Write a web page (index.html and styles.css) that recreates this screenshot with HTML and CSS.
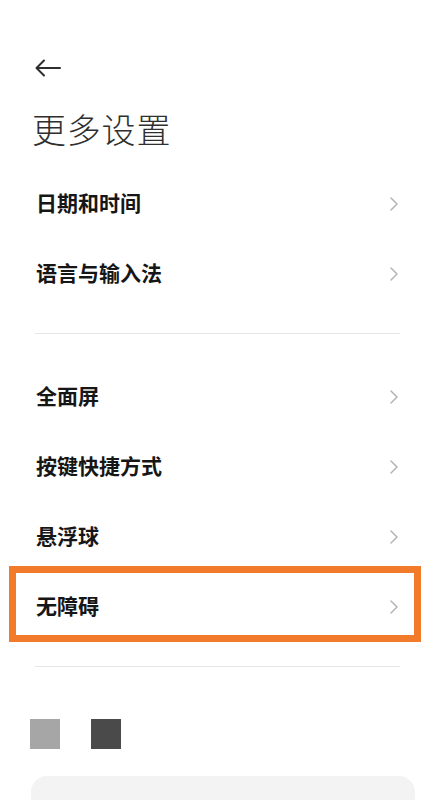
FILE: index.html
```html
<!DOCTYPE html>
<html lang="zh-CN">
<head>
<meta charset="utf-8">
<title>更多设置</title>
<link rel="stylesheet" href="styles.css">
</head>
<body>
<div class="page">
  <header class="header">
    <svg class="back" width="26" height="24" viewBox="0 0 26 24" aria-hidden="true">
      <path d="M25 12 H2 M9 4.5 L1.5 12 L9 19.5" fill="none" stroke="#2e2e2e" stroke-width="2" stroke-linecap="round" stroke-linejoin="round"/>
    </svg>
  </header>
  <h1 class="title">更多设置</h1>

  <ul class="group">
    <li class="row"><span class="label">日期和时间</span><svg class="chev" width="12" height="16" viewBox="0 0 12 16"><path d="M3 2 L9 8 L3 14" fill="none" stroke="#b4b4b4" stroke-width="1.5" stroke-linecap="round" stroke-linejoin="round"/></svg></li>
    <li class="row"><span class="label">语言与输入法</span><svg class="chev" width="12" height="16" viewBox="0 0 12 16"><path d="M3 2 L9 8 L3 14" fill="none" stroke="#b4b4b4" stroke-width="1.5" stroke-linecap="round" stroke-linejoin="round"/></svg></li>
  </ul>

  <div class="divider"></div>

  <ul class="group">
    <li class="row"><span class="label">全面屏</span><svg class="chev" width="12" height="16" viewBox="0 0 12 16"><path d="M3 2 L9 8 L3 14" fill="none" stroke="#b4b4b4" stroke-width="1.5" stroke-linecap="round" stroke-linejoin="round"/></svg></li>
    <li class="row"><span class="label">按键快捷方式</span><svg class="chev" width="12" height="16" viewBox="0 0 12 16"><path d="M3 2 L9 8 L3 14" fill="none" stroke="#b4b4b4" stroke-width="1.5" stroke-linecap="round" stroke-linejoin="round"/></svg></li>
    <li class="row"><span class="label">悬浮球</span><svg class="chev" width="12" height="16" viewBox="0 0 12 16"><path d="M3 2 L9 8 L3 14" fill="none" stroke="#b4b4b4" stroke-width="1.5" stroke-linecap="round" stroke-linejoin="round"/></svg></li>
    <li class="row row-highlight"><span class="label">无障碍</span><svg class="chev" width="12" height="16" viewBox="0 0 12 16"><path d="M3 2 L9 8 L3 14" fill="none" stroke="#b4b4b4" stroke-width="1.5" stroke-linecap="round" stroke-linejoin="round"/></svg></li>
  </ul>

  <div class="divider"></div>

  <div class="swatches">
    <span class="swatch swatch-light"></span>
    <span class="swatch swatch-dark"></span>
  </div>

  <div class="panel"></div>
</div>
</body>
</html>
```

FILE: styles.css
```css
* { box-sizing: border-box; }

html, body {
  margin: 0;
  padding: 0;
  background: #ffffff;
}

body {
  font-family: "Noto Sans CJK SC", "Noto Sans", sans-serif;
  color: #1a1a1a;
  overflow: hidden;
}

.page {
  display: flex;
  flex-direction: column;
  height: 800px;
}

.page > * { flex-shrink: 0; }

.header {
  display: flex;
  align-items: center;
  padding: 56px 0 0 35px;
  height: 80px;
}

.back { display: block; }

.title {
  margin: 27px 0 0 0;
  padding-left: 32px;
  font-size: 34px;
  line-height: 44px;
  font-weight: 300;
  color: #2f2f2f;
  letter-spacing: 0.8px;
}

.group {
  list-style: none;
  margin: 0;
  padding: 0;
}

.group:first-of-type { margin-top: 16px; }

.row {
  display: flex;
  align-items: center;
  justify-content: space-between;
  height: 70px;
  padding: 0 34px 0 36px;
}

.label {
  font-size: 21px;
  line-height: 28px;
  font-weight: 700;
  color: #161616;
}

.chev {
  display: block;
  margin-top: 3px;
}

.row-highlight { position: relative; }

.row-highlight::after {
  content: "";
  position: absolute;
  left: 9px;
  right: 13px;
  top: -4px;
  bottom: -2px;
  border: 7px solid #f27a2b;
  pointer-events: none;
}

.divider {
  height: 1px;
  margin: 26px 34px 26px 35px;
  background: #e6e6e6;
}

.swatches {
  display: flex;
  gap: 31px;
  padding-left: 30px;
  margin-top: 26px;
}

.swatch {
  width: 30px;
  height: 30px;
  display: block;
}

.swatch-light { background: #a6a6a6; }
.swatch-dark { background: #4a4a4a; }

.panel {
  flex: 1 1 auto;
  flex-shrink: 1;
  min-height: 0;
  margin: 27px 19px 0 31px;
  border-radius: 16px 16px 0 0;
  background: #f3f3f3;
}
```
